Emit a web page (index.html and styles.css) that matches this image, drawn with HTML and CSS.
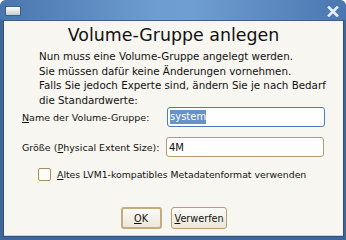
FILE: index.html
```html
<!DOCTYPE html>
<html>
<head>
<meta charset="utf-8">
<link rel="stylesheet" href="styles.css">
</head>
<body>
<div class="window">
  <div class="titlebar">
    <div class="winicon"></div>
    <svg class="close" width="12" height="11" viewBox="0 0 12 11">
      <path d="M2 1.5 L10 9.5 M10 1.5 L2 9.5" stroke="#e6eef8" stroke-width="2.6" stroke-linecap="square"/>
    </svg>
  </div>
  <div class="content">
    <h1 class="heading">Volume-Gruppe anlegen</h1>
    <p class="intro">Nun muss eine Volume-Gruppe angelegt werden.<br>Sie müssen dafür keine Änderungen vornehmen.<br>Falls Sie jedoch Experte sind, ändern Sie je nach Bedarf<br>die Standardwerte:</p>
    <div class="form">
      <label class="label"><u>N</u>ame der Volume-Gruppe:</label>
      <div class="entry focused"><span class="sel">system</span></div>
      <label class="label">Größe (<u>P</u>hysical Extent Size):</label>
      <div class="entry">4M</div>
    </div>
    <div class="check-row">
      <span class="checkbox"></span>
      <span class="check-label"><u>A</u>ltes LVM1-kompatibles Metadatenformat verwenden</span>
    </div>
    <div class="buttons">
      <button class="btn default"><u>O</u>K</button>
      <button class="btn"><u>V</u>erwerfen</button>
    </div>
  </div>
</div>
</body>
</html>
```
FILE: styles.css
```css
html, body {
  margin: 0;
  padding: 0;
  background: #ffffff;
}
.window {
  width: 346px;
  height: 240px;
  box-sizing: border-box;
  display: flex;
  flex-direction: column;
  background: #3f6799;
  border-radius: 6px 6px 0 0;
  font-family: "DejaVu Sans", sans-serif;
  color: #111111;
  overflow: hidden;
}
.titlebar {
  height: 20px;
  flex: none;
  display: flex;
  align-items: center;
  justify-content: space-between;
  padding: 0 7px 0 5px;
  background: linear-gradient(to right, #4a76ae 0%, #6d9dd1 45%, #6f9ed2 55%, #4b77b0 100%);
  border-radius: 6px 6px 0 0;
}
.winicon {
  width: 14px;
  height: 8px;
  margin-top: 2px;
  border: 1px solid #3d5f8c;
  background: linear-gradient(to bottom, #ffffff, #c9ccd0);
}
.close {
  margin-top: 2px;
}
.content {
  flex: 1;
  margin: 0 2px 3px 3px;
  background: #f8f6f0;
  border: 1px solid #2f517d;
  border-top-color: #3a5f8f;
  box-shadow: inset 0 -1px 0 #c9d4e2;
  display: flex;
  flex-direction: column;
}
.heading {
  margin: 3px 0 0 0;
  font-size: 17.4px;
  font-weight: normal;
  text-align: center;
  line-height: 22px;
}
.intro {
  margin: 3px 0 0 35px;
  font-size: 10.3px;
  line-height: 14.5px;
}
.form {
  display: grid;
  grid-template-columns: 144px 158px;
  grid-auto-rows: 20px;
  row-gap: 10px;
  margin: 0 0 0 18px;
  align-items: center;
}
.label {
  font-size: 9.5px;
  white-space: nowrap;
}
.entry {
  height: 20px;
  box-sizing: border-box;
  border: 1px solid #b39d70;
  border-radius: 3px;
  background: #ffffff;
  font-size: 10px;
  padding: 0 2px;
  display: flex;
  align-items: center;
}
.entry.focused {
  border-color: #4f7cb8;
  margin-left: 1px;
  margin-right: -1px;
}
.sel {
  background: #6891c8;
  color: #ffffff;
  line-height: 14px;
}
.check-row {
  display: flex;
  align-items: center;
  height: 14px;
  margin: 10px 0 0 34px;
  gap: 6px;
}
.checkbox {
  width: 11px;
  height: 11px;
  border: 1px solid #a48f62;
  border-radius: 2px;
  background: #fdfcf9;
}
.check-label {
  font-size: 9.3px;
}
.buttons {
  display: flex;
  justify-content: center;
  gap: 9px;
  margin-top: 26px;
  padding-left: 0;
}
.btn {
  font-family: "DejaVu Sans", sans-serif;
  font-size: 9.7px;
  color: #111111;
  height: 22px;
  box-sizing: border-box;
  border: 1px solid #b49e72;
  border-radius: 3px;
  background: linear-gradient(to bottom, #fbfaf6, #ece7da);
  padding: 0 3px;
  width: 56px;
}
.btn.default {
  width: 41px;
  border: 2px solid #c3ad7d;
}
```
